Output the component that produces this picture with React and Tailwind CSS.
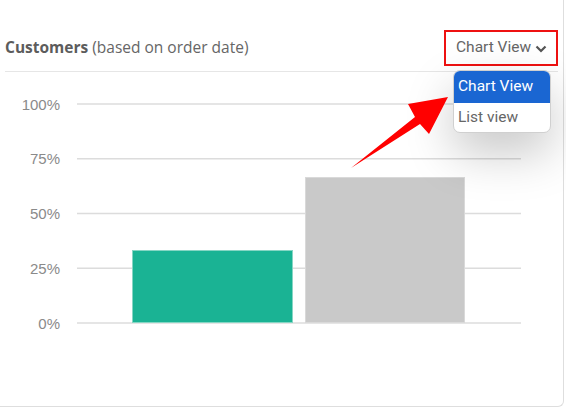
import React from "react";

const grid = [
  { label: "100%", y: 32 },
  { label: "75%", y: 86.75 },
  { label: "50%", y: 141.5 },
  { label: "25%", y: 196.25 },
  { label: "0%", y: 251 },
];

export default function App() {
  return (
    <div className="relative w-[566px] h-[409px] bg-white overflow-hidden" style={{ fontFamily: "'Liberation Sans', Arial, sans-serif" }}>
      <div className="w-[564px] h-[407px] border-r border-b border-[#dedede] rounded-br-[6px] flex flex-col">
        <div className="pt-[30px] pl-[5px] pr-[5px] flex items-center justify-between h-[66px]">
          <div className="text-[15.5px] text-[#666]" style={{ fontFamily: "'Open Sans', sans-serif" }}>
            <span className="font-bold text-[#5c5c5c]">Customers</span>{" "}
            <span>(based on order date)</span>
          </div>
          <div className="h-[36px] w-[114px] border-2 border-[#ee1111] flex items-center pl-[10px] gap-[4px] text-[15.5px] text-[#666]" style={{ fontFamily: "Roboto, sans-serif" }}>
            <span>Chart View</span>
            <svg width="12" height="8" viewBox="0 0 12 8" className="mt-[2px]">
              <path d="M1.5 1.5 L6 6 L10.5 1.5" fill="none" stroke="#555" strokeWidth="2.2" />
            </svg>
          </div>
        </div>
        <div className="mt-[5px] mx-[5px] h-px bg-[#e6e6e6]" />
        <svg width="564" height="334" className="block">
          {grid.map((g) => (
            <g key={g.label}>
              <line x1="77" x2="521" y1={g.y} y2={g.y} stroke="#dcdcdc" strokeWidth="1.5" />
              <text x="60" y={g.y + 5.5} textAnchor="end" fontSize="15" fill="#8a8a8a" fontFamily="'Liberation Sans', Arial, sans-serif">
                {g.label}
              </text>
            </g>
          ))}
          <rect x="132.5" y="178.5" width="160" height="72" fill="#1ab394" stroke="#86d6c4" strokeWidth="1" />
          <rect x="305.5" y="105.5" width="159" height="145" fill="#c9c9c9" stroke="#d9d9d9" strokeWidth="1" />
        </svg>
      </div>

      <div className="absolute left-[453px] top-[70px] w-[98px] rounded-[7px] bg-white overflow-hidden border border-[#d0d0d0] shadow-[0_20px_48px_rgba(0,0,0,0.22)] text-[15.5px]" style={{ fontFamily: "Roboto, sans-serif" }}>
        <div className="h-[32px] bg-[#1a66d2] text-white flex items-center pl-[4px]">Chart View</div>
        <div className="h-[29px] text-[#666] flex items-center pl-[4px]">List view</div>
      </div>

      <svg className="absolute left-0 top-0 pointer-events-none" width="566" height="409">
        <polygon points="351,168 420,124 429,134 448,97 408,104 415,117" fill="#ff0000" />
      </svg>
    </div>
  );
}
